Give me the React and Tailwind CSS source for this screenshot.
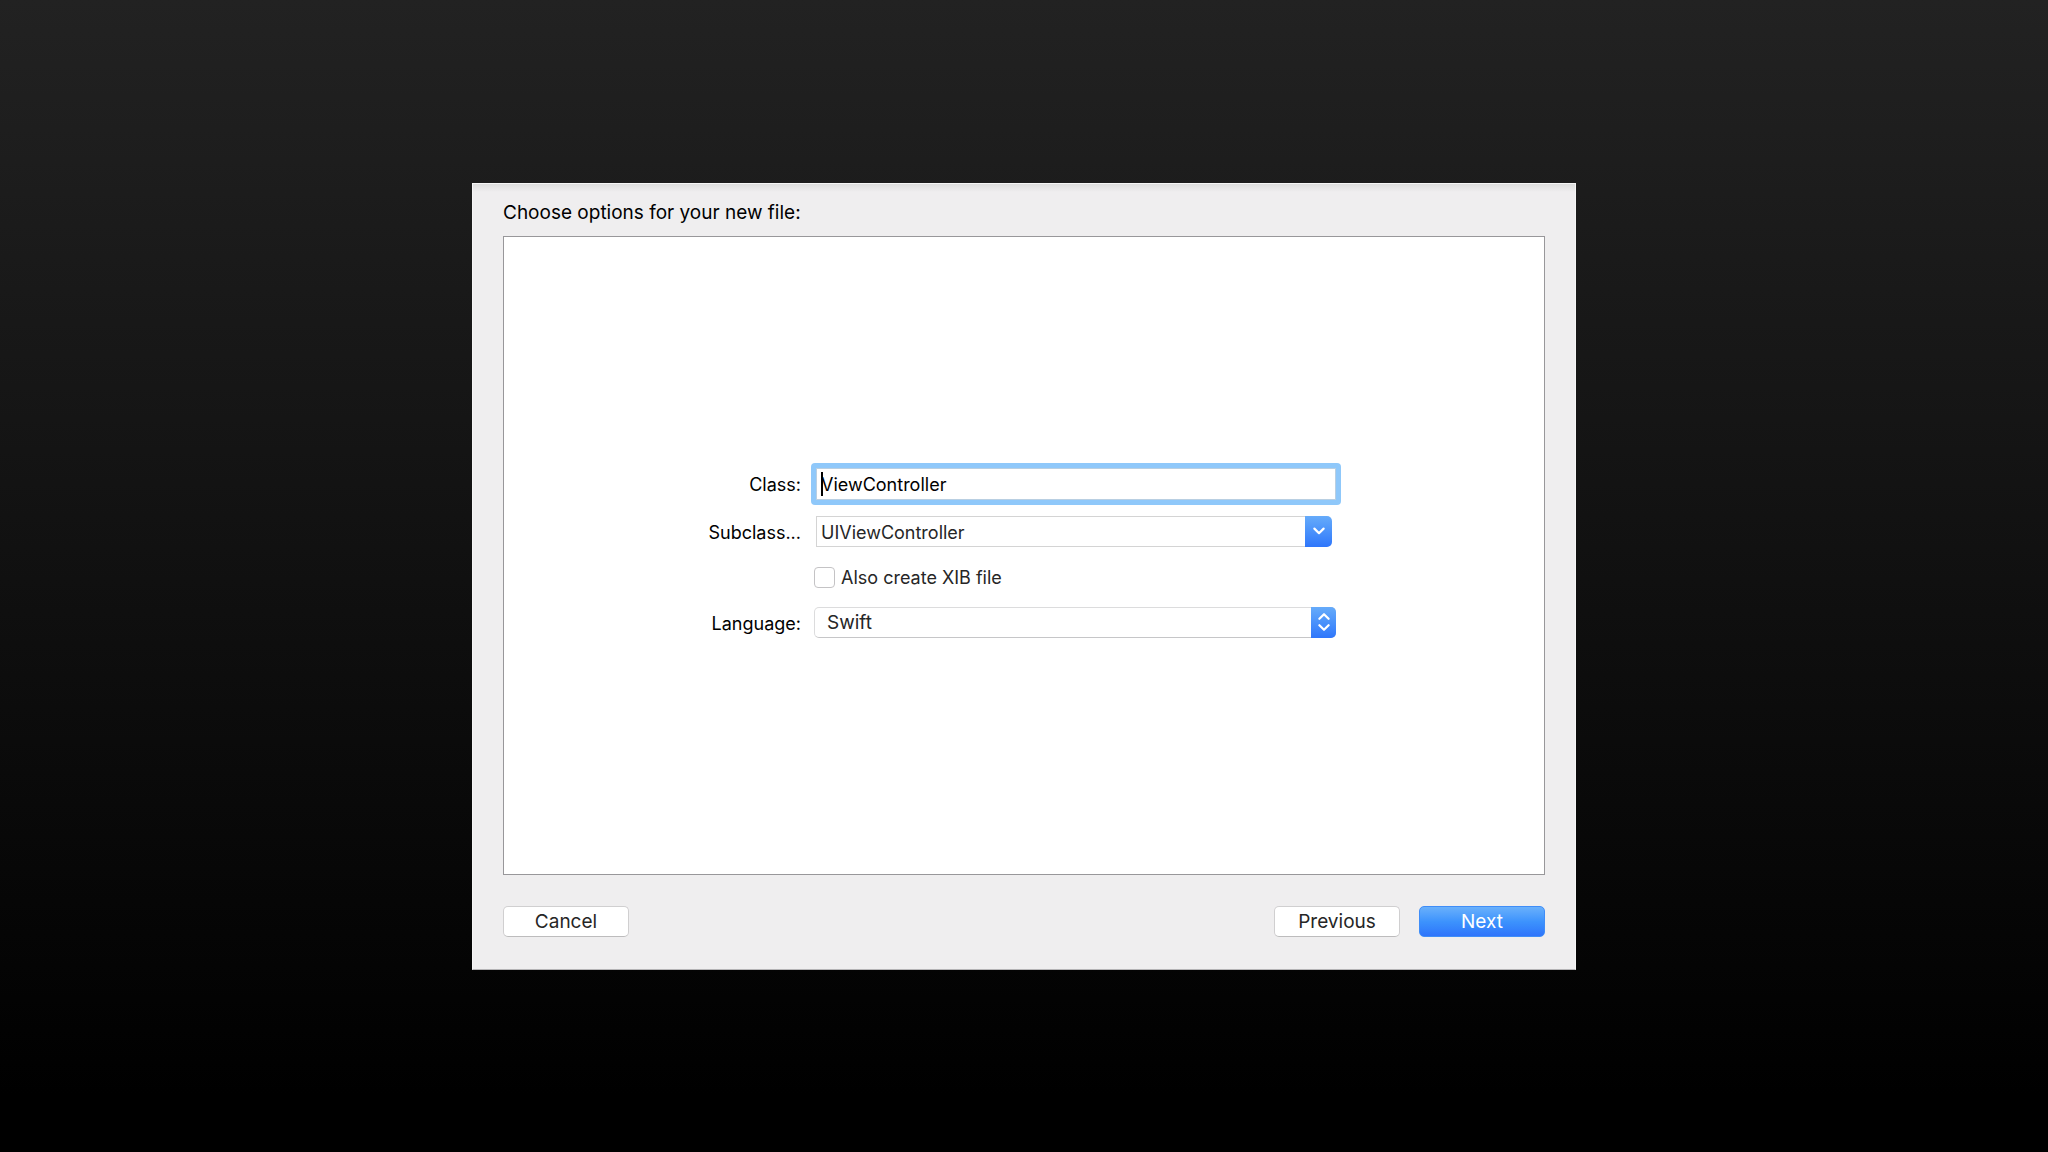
import { useState } from 'react';

const LANGUAGES = ['Swift', 'Objective-C'];

function FormRow({ label, htmlFor, className = '', children }) {
  return (
    <div className={`grid grid-cols-[94px_1fr] items-center gap-[10px] ${className}`}>
      {label ? (
        <label htmlFor={htmlFor} className="pt-[3px] text-right text-[18px] leading-6 whitespace-nowrap text-black">
          {label}
        </label>
      ) : (
        <span />
      )}
      {children}
    </div>
  );
}

function ChevronDown() {
  return (
    <svg width="12" height="8" viewBox="0 0 12 8" fill="none" stroke="white" strokeWidth="2.2" strokeLinecap="round" strokeLinejoin="round" aria-hidden>
      <path d="M1.4 1.6 6 6.2 10.6 1.6" />
    </svg>
  );
}

function ChevronUpDown() {
  return (
    <svg width="12" height="20" viewBox="0 0 12 20" fill="none" stroke="white" strokeWidth="2.2" strokeLinecap="round" strokeLinejoin="round" aria-hidden>
      <path d="M1.4 6.8 6 2.2 10.6 6.8" />
      <path d="M1.4 13.2 6 17.8 10.6 13.2" />
    </svg>
  );
}

function PushButton({ primary, children }) {
  const look = primary
    ? 'border-[#3f8df8] bg-linear-to-b from-[#69b0fb] via-[#3d93fd] to-[#2f74fb] text-white'
    : 'border-[#d0cfd0] border-b-[#bdbcbd] bg-white text-[#262626]';
  return (
    <button type="button" className={`flex h-[31px] w-[126px] items-center justify-center rounded-[5px] border pt-px text-[19px] leading-6 ${look}`}>
      {children}
    </button>
  );
}

export default function App() {
  const [className, setClassName] = useState('ViewController');
  const [subclass, setSubclass] = useState('UIViewController');
  const [createXib, setCreateXib] = useState(false);
  const [language, setLanguage] = useState('Swift');

  return (
    <main className="flex min-h-screen items-center justify-center bg-linear-to-b/srgb from-[#222222] to-black to-95% font-['Inter',sans-serif]">
      <form className="w-full max-w-[1104px] border border-[#f6f6f6] border-b-[#b5b4b6] bg-[#efeeef] bg-linear-to-b/srgb from-[#dddddd] to-[#efeeef] to-[8px] px-[30px] pt-[17px] pb-8">
        <h1 className="text-[19px] leading-6 text-black">Choose options for your new file:</h1>

        <div className="mt-[11px] border border-[#98979a] bg-white px-6 pt-[226px] pb-[236px]">
          <div className="mx-auto max-w-[634px]">
            <FormRow label="Class:" htmlFor="class-name">
              <div className="relative rounded-[4px] bg-[#8fc8fa] p-[5px]">
                <input
                  id="class-name"
                  type="text"
                  value={className}
                  onChange={(e) => setClassName(e.target.value)}
                  className="block h-8 w-full border border-[#b9cfe2] bg-white px-1 pt-[2px] text-[18px] leading-6 text-black outline-none"
                />
                {/* insertion point */}
                <span className="pointer-events-none absolute top-[9px] left-[10px] h-6 w-[2px] bg-black" aria-hidden />
              </div>
            </FormRow>

            <FormRow label="Subclass..." htmlFor="subclass" className="mt-[11px]">
              <div className="mr-[9px] ml-[5px] flex h-[31px]">
                <input
                  id="subclass"
                  type="text"
                  value={subclass}
                  onChange={(e) => setSubclass(e.target.value)}
                  className="min-w-0 flex-1 border border-r-0 border-[#d4d4d4] bg-white px-1 pt-[4px] text-[18px] leading-6 text-[#262626] outline-none"
                />
                <button
                  type="button"
                  aria-label="Show subclasses"
                  className="flex w-[27px] items-center justify-center rounded-r-[5px] bg-linear-to-b from-[#66abfa] to-[#2f76fb]"
                >
                  <ChevronDown />
                </button>
              </div>
            </FormRow>

            <FormRow className="mt-[19px]">
              <div className="ml-[3px] flex items-center gap-[6px]">
                <input
                  id="create-xib"
                  type="checkbox"
                  checked={createXib}
                  onChange={(e) => setCreateXib(e.target.checked)}
                  className="size-[21px] appearance-none rounded-[4px] border border-[#c4c3c5] bg-white checked:bg-[#3d93fd]"
                />
                <label htmlFor="create-xib" className="text-[18px] leading-6 text-[#262626]">
                  Also create XIB file
                </label>
              </div>
            </FormRow>

            <FormRow label="Language:" htmlFor="language" className="mt-[17px]">
              <div className="relative mr-[5px] ml-[3px]">
                <select
                  id="language"
                  value={language}
                  onChange={(e) => setLanguage(e.target.value)}
                  className="block h-[31px] w-full appearance-none rounded-[5px] border border-[#dcdcdd] border-b-[#c6c6c8] bg-white px-3 pt-[2px] text-[19px] leading-6 text-[#262626] outline-none"
                >
                  {LANGUAGES.map((name) => (
                    <option key={name}>{name}</option>
                  ))}
                </select>
                <span className="pointer-events-none absolute inset-y-0 right-0 flex w-[25px] items-center justify-center rounded-r-[5px] bg-linear-to-b from-[#66abfa] to-[#2f76fb]">
                  <ChevronUpDown />
                </span>
              </div>
            </FormRow>
          </div>
        </div>

        <div className="mt-[31px] flex items-center">
          <PushButton>Cancel</PushButton>
          <div className="ml-auto flex gap-[19px]">
            <PushButton>Previous</PushButton>
            <PushButton primary>Next</PushButton>
          </div>
        </div>
      </form>
    </main>
  );
}
